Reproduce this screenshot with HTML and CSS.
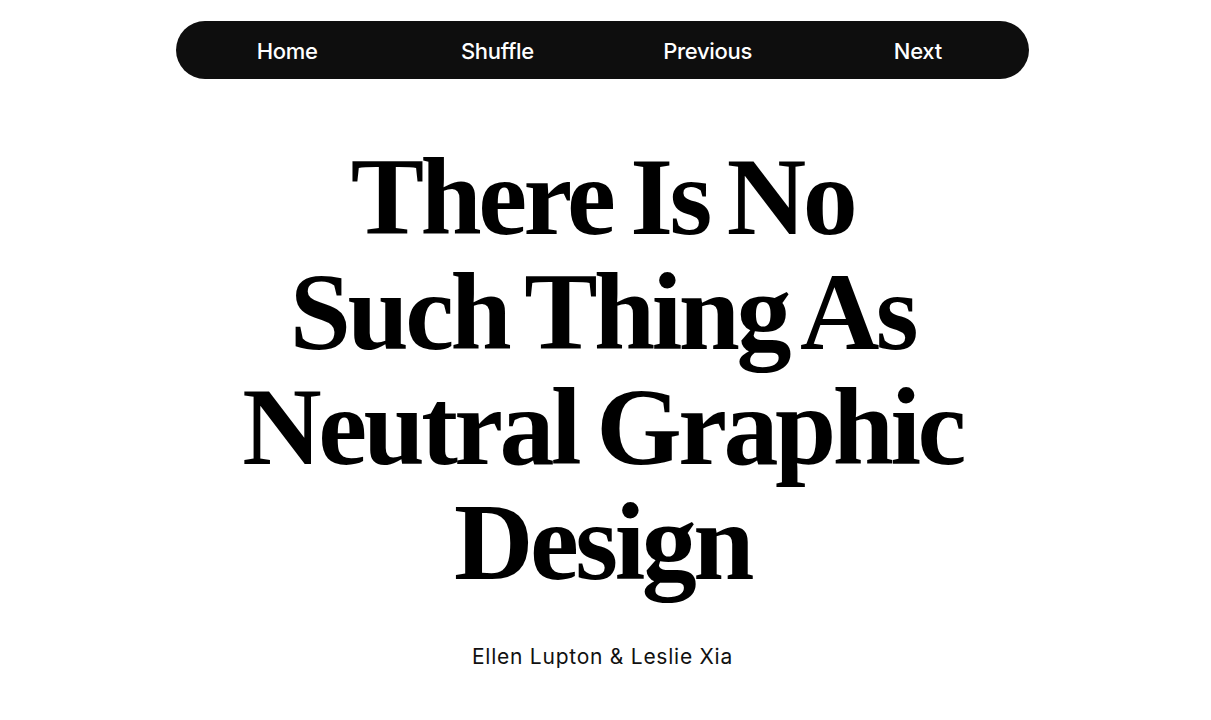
FILE: index.html
```html
<!DOCTYPE html>
<html lang="en">
<head>
<meta charset="utf-8">
<title>There Is No Such Thing As Neutral Graphic Design</title>
<link rel="stylesheet" href="styles.css">
</head>
<body>
<div class="page">
  <nav class="nav">
    <a class="nav-link" href="#">Home</a>
    <a class="nav-link" href="#">Shuffle</a>
    <a class="nav-link" href="#">Previous</a>
    <a class="nav-link" href="#">Next</a>
  </nav>
  <main class="hero">
    <h1 class="title">There Is No<br>Such Thing As<br>Neutral Graphic<br>Design</h1>
    <p class="author">Ellen Lupton &amp; Leslie Xia</p>
  </main>
</div>
</body>
</html>
```
FILE: styles.css
```css
html, body {
  margin: 0;
  padding: 0;
  background: #ffffff;
}

.page {
  width: 1205px;
  display: flex;
  flex-direction: column;
  align-items: center;
  padding-top: 21px;
}

.nav {
  width: 853px;
  height: 58px;
  box-sizing: border-box;
  padding: 2px 6px 0;
  background: #0e0e0e;
  border-radius: 29px;
  display: grid;
  grid-template-columns: repeat(4, 1fr);
  align-items: center;
}

.nav-link {
  color: #ffffff;
  text-decoration: none;
  text-align: center;
  font-family: Inter, "Noto Sans", sans-serif;
  font-size: 22px;
  font-weight: 500;
  letter-spacing: -0.3px;
}

.hero {
  display: flex;
  flex-direction: column;
  align-items: center;
}

.title {
  margin: 61px 0 0;
  font-family: "Liberation Serif", "Times New Roman", serif;
  font-weight: 700;
  font-size: 110px;
  line-height: 115px;
  letter-spacing: -3.5px;
  word-spacing: -6px;
  text-align: center;
  color: #000000;
}

.author {
  margin: 45px 0 0;
  font-family: Inter, "Noto Sans", sans-serif;
  font-size: 21px;
  line-height: 24px;
  font-weight: 400;
  letter-spacing: 0.75px;
  color: #111111;
}
```
